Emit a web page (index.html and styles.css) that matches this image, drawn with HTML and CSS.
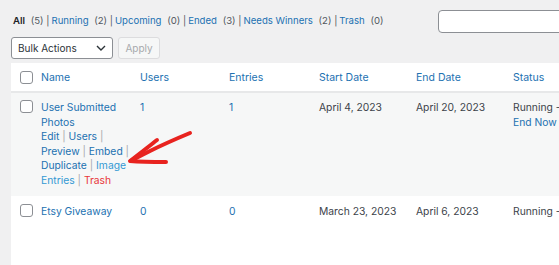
FILE: index.html
```html
<!DOCTYPE html>
<html lang="en">
<head>
    <meta charset="UTF-8">
    <meta name="viewport" content="width=device-width, initial-scale=1.0">
    <title>Giveaways</title>
    <link rel="stylesheet" href="styles.css">
</head>
<body>
    <div class="wrap">
        <div class="top-row">
            <ul class="subsubsub">
                <li><a class="current">All</a> <span class="count">(5)</span> |</li>
                <li><a>Running</a> <span class="count">(2)</span> |</li>
                <li><a>Upcoming</a> <span class="count">(0)</span> |</li>
                <li><a>Ended</a> <span class="count">(3)</span> |</li>
                <li><a>Needs Winners</a> <span class="count">(2)</span> |</li>
                <li><a>Trash</a> <span class="count">(0)</span></li>
            </ul>
            <input class="search-input" type="search">
        </div>

        <div class="tablenav">
            <div class="bulk-select">
                <span>Bulk Actions</span>
                <svg width="10" height="6" viewBox="0 0 10 6"><path d="M1 1l4 4 4-4" fill="none" stroke="#2c3338" stroke-width="1.4"/></svg>
            </div>
            <button class="apply" disabled>Apply</button>
        </div>

        <table class="list-table">
            <colgroup>
                <col class="col-cb">
                <col class="col-name">
                <col class="col-users">
                <col class="col-entries">
                <col class="col-start">
                <col class="col-end">
                <col class="col-status">
            </colgroup>
            <thead>
                <tr>
                    <td class="check"><span class="checkbox"></span></td>
                    <th><a>Name</a></th>
                    <th><a>Users</a></th>
                    <th><a>Entries</a></th>
                    <th><a>Start Date</a></th>
                    <th><a>End Date</a></th>
                    <th><a>Status</a></th>
                </tr>
            </thead>
            <tbody>
                <tr class="alt">
                    <td class="check"><span class="checkbox"></span></td>
                    <td>
                        <a>User Submitted<br>Photos</a>
                        <div class="row-actions">
                            <a>Edit</a> <span class="sep">|</span> <a>Users</a> <span class="sep">|</span><br>
                            <a>Preview</a> <span class="sep">|</span> <a>Embed</a> <span class="sep">|</span><br>
                            <a>Duplicate</a> <span class="sep">|</span> <a class="light">Image<br>Entries</a> <span class="sep">|</span>
                            <a class="trash">Trash</a>
                        </div>
                    </td>
                    <td><a>1</a></td>
                    <td><a>1</a></td>
                    <td>April 4, 2023</td>
                    <td>April 20, 2023</td>
                    <td>Running -<br><a>End Now</a></td>
                </tr>
                <tr>
                    <td class="check"><span class="checkbox"></span></td>
                    <td><a>Etsy Giveaway</a></td>
                    <td><a>0</a></td>
                    <td><a>0</a></td>
                    <td>March 23, 2023</td>
                    <td>April 6, 2023</td>
                    <td>Running -</td>
                </tr>
            </tbody>
        </table>
    </div>

    <svg class="arrow" width="80" height="50" viewBox="0 0 80 50">
        <path d="M70 6 C58 11, 44 17, 30 24 C22 28, 16 31, 11 34" fill="none" stroke="#e8231f" stroke-width="4" stroke-linecap="round"/>
        <path d="M37 13 C28 20, 18 28, 10 34 C22 35, 36 35, 46 35" fill="none" stroke="#e8231f" stroke-width="4" stroke-linecap="round" stroke-linejoin="round"/>
    </svg>
</body>
</html>
```

FILE: styles.css
```css
body {
    margin: 0;
    background: #f0f0f1;
    font-family: 'Inter', 'Noto Sans', sans-serif;
    font-size: 10px;
    color: #3c434a;
    overflow: hidden;
    height: 265px;
    position: relative;
}

a {
    color: #2271b1;
    text-decoration: none;
}

.wrap {
    padding-left: 11px;
}

.top-row {
    display: flex;
    justify-content: space-between;
    align-items: flex-start;
    height: 37px;
}

.subsubsub {
    list-style: none;
    margin: 14px 0 0 2px;
    padding: 0;
    display: flex;
    gap: 2px;
    color: #50575e;
    font-size: 9.6px;
    line-height: 13px;
    white-space: nowrap;
}

.subsubsub .current {
    color: #1d2327;
    font-weight: 600;
}

.subsubsub .count {
    margin-left: 3px;
    color: #50575e;
}

.search-input {
    width: 131px;
    height: 23px;
    margin: 10px -10px 0 0;
    box-sizing: border-box;
    border: 1px solid #8c8f94;
    border-radius: 4px;
    background: #fff;
}

.tablenav {
    display: flex;
    gap: 5px;
    height: 26px;
}

.bulk-select {
    width: 102px;
    height: 22px;
    box-sizing: border-box;
    border: 1px solid #8c8f94;
    border-radius: 3px;
    background: #fff;
    display: flex;
    align-items: center;
    justify-content: space-between;
    padding: 0 6px 0 6px;
    color: #2c3338;
    font-size: 10px;
}

.apply {
    width: 42px;
    height: 22px;
    box-sizing: border-box;
    border: 1px solid #dcdcde;
    border-radius: 3px;
    background: #f6f7f7;
    color: #a7aaad;
    font-family: inherit;
    font-size: 10px;
    padding: 0;
}

.list-table {
    width: 620px;
    table-layout: fixed;
    border-collapse: collapse;
    background: #fff;
}

.col-cb { width: 26px; }
.col-name { width: 99px; }
.col-users { width: 89px; }
.col-entries { width: 90px; }
.col-start { width: 97px; }
.col-end { width: 97px; }
.col-status { width: 122px; }

.list-table th {
    font-weight: 400;
    text-align: left;
    height: 28px;
    padding: 0 4px;
    border-bottom: 2px solid #e7e8e9;
    font-size: 10.5px;
}

.list-table thead td {
    border-bottom: 2px solid #e7e8e9;
}

.list-table tbody td {
    vertical-align: top;
    padding: 7px 4px 8px;
    line-height: 14.6px;
    font-size: 10.3px;
}

.list-table .check {
    padding: 0;
    vertical-align: middle;
}

.list-table tbody .check {
    vertical-align: top;
    padding-top: 7px;
}

tr.alt {
    background: #f6f7f7;
}

.list-table tbody tr:last-child td {
    padding-top: 8px;
    height: 60px;
}

.checkbox {
    display: block;
    width: 11px;
    height: 11px;
    margin-left: 9px;
    border: 1px solid #8c8f94;
    border-radius: 3px;
    background: #fff;
}

.row-actions .sep {
    color: #a7aaad;
}

.row-actions .light {
    color: #3399d3;
}

.row-actions .trash {
    color: #e8383a;
}

.arrow {
    position: absolute;
    left: 120px;
    top: 127px;
}
```
